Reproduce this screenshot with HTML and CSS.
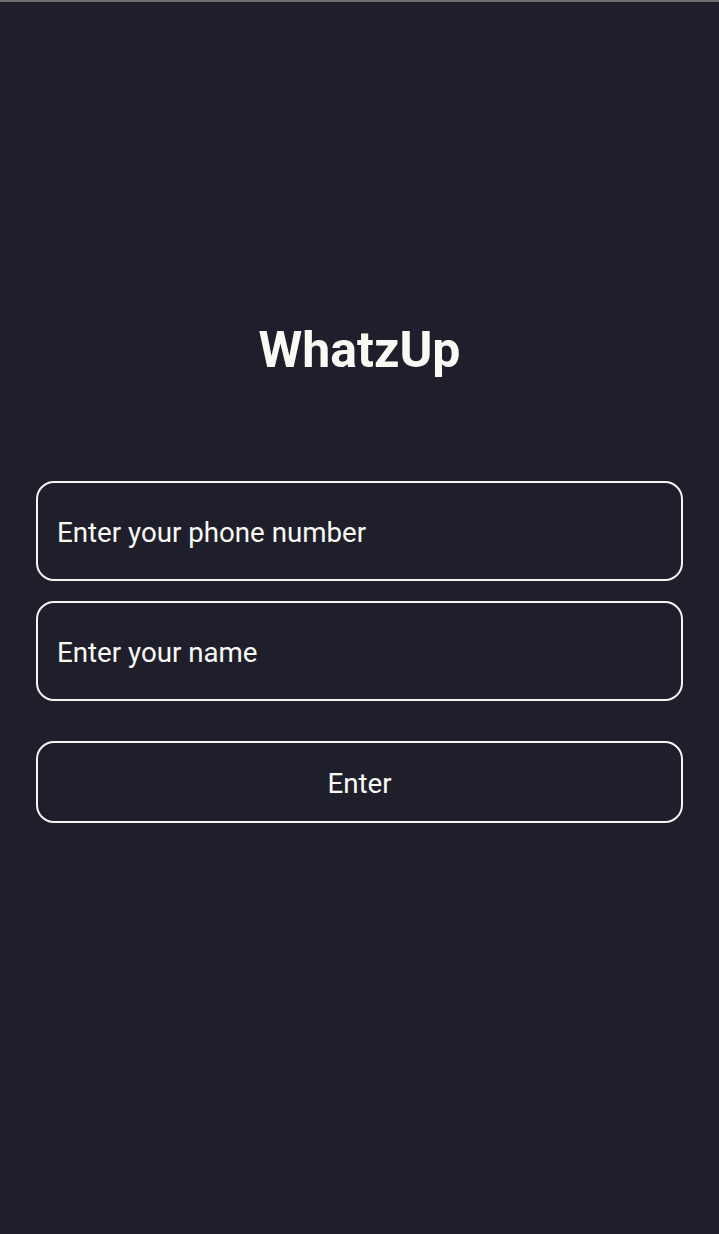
FILE: index.html
```html
<!DOCTYPE html>
<html lang="en">
<head>
<meta charset="utf-8">
<title>WhatzUp</title>
<link rel="stylesheet" href="styles.css">
</head>
<body>
<div class="topbar"></div>
<main class="screen">
  <h1 class="title">WhatzUp</h1>
  <form class="form">
    <input class="field" type="tel" placeholder="Enter your phone number">
    <input class="field" type="text" placeholder="Enter your name">
    <button class="btn" type="button">Enter</button>
  </form>
</main>
</body>
</html>
```

FILE: styles.css
```css
html, body {
  margin: 0;
  padding: 0;
  background: #1f1f2c;
  height: 100%;
}
body {
  font-family: Roboto, "Noto Sans", sans-serif;
  color: #fafaf5;
  display: flex;
  flex-direction: column;
}
.topbar {
  height: 2px;
  background: #6e6e6e;
  flex: none;
}
.screen {
  flex: 1;
  padding: 0 36px;
  display: flex;
  flex-direction: column;
}
.title {
  margin: 316px 0 0;
  text-align: center;
  font-size: 50px;
  font-weight: 700;
  line-height: 64px;
  color: #fafaf5;
}
.form {
  margin-top: 99px;
  display: flex;
  flex-direction: column;
}
.field {
  box-sizing: border-box;
  height: 100px;
  border: 2px solid #f5f5f0;
  border-radius: 18px;
  background: transparent;
  padding: 2px 19px 0;
  font-family: Roboto, sans-serif;
  font-size: 27.7px;
  color: #fafaf5;
  outline: none;
  margin-bottom: 20px;
}
.field::placeholder {
  color: #fafaf5;
  opacity: 1;
}
.btn {
  box-sizing: border-box;
  height: 82px;
  margin-top: 20px;
  border: 2px solid #f5f5f0;
  border-radius: 18px;
  background: transparent;
  color: #fafaf5;
  font-family: Roboto, sans-serif;
  font-size: 27.7px;
  padding: 2px 0 0;
  cursor: pointer;
}
```
